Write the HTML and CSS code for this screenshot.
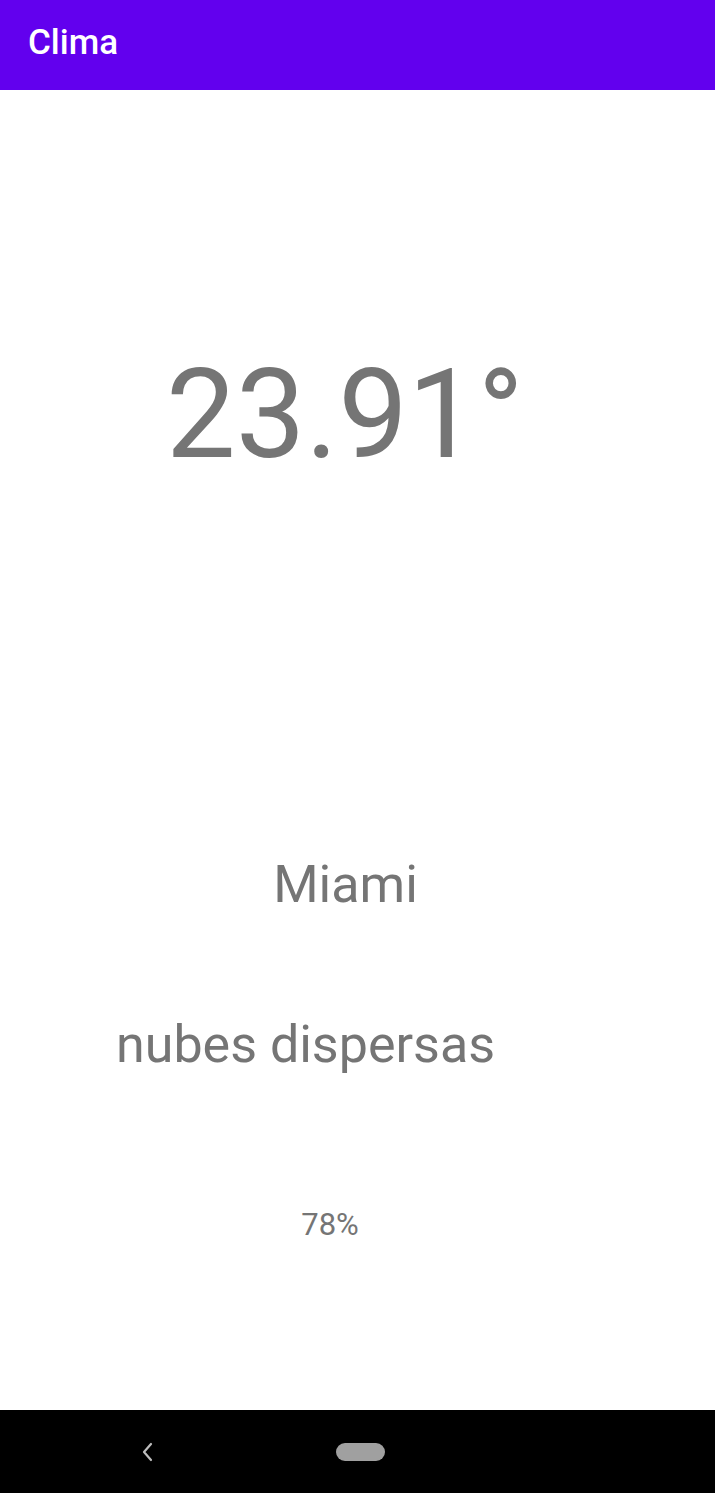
FILE: index.html
```html
<!DOCTYPE html>
<html lang="es">
<head>
<meta charset="utf-8">
<title>Clima</title>
<link rel="stylesheet" href="styles.css">
</head>
<body>
<div class="screen">
  <header class="appbar"><h1 class="title">Clima</h1></header>
  <main class="content">
    <div class="temp">23.91°</div>
    <div class="city">Miami</div>
    <div class="desc">nubes dispersas</div>
    <div class="humidity">78%</div>
  </main>
  <nav class="navbar">
    <svg class="back" width="12" height="20" viewBox="0 0 12 20"><path d="M10 2 L3 10 L10 18" fill="none" stroke="#bdbdbd" stroke-width="2.2" stroke-linecap="round" stroke-linejoin="round"/></svg>
    <div class="pill"></div>
  </nav>
</div>
</body>
</html>
```
FILE: styles.css
```css
html, body {
  margin: 0;
  padding: 0;
  background: #ffffff;
}
.screen {
  width: 715px;
  height: 1493px;
  display: flex;
  flex-direction: column;
  font-family: Roboto, "Noto Sans", sans-serif;
  overflow: hidden;
}
.appbar {
  height: 90px;
  flex: none;
  background: #6200ee;
  box-sizing: border-box;
  padding: 25px 0 0 28px;
}
.title {
  margin: 0;
  font-size: 35px;
  line-height: 35px;
  font-weight: 500;
  color: #ffffff;
}
.content {
  flex: 1;
  display: flex;
  flex-direction: column;
  padding-top: 263px;
  color: #757575;
}
.temp {
  font-size: 124px;
  line-height: 124px;
  text-align: center;
  padding-right: 25px;
}
.city {
  margin-top: 382px;
  font-size: 52px;
  line-height: 52px;
  text-align: center;
  padding-right: 24px;
}
.desc {
  margin-top: 108px;
  font-size: 52px;
  line-height: 52px;
  padding-left: 116px;
}
.humidity {
  margin-top: 138px;
  font-size: 31px;
  line-height: 31px;
  text-align: center;
  padding-right: 55px;
}
.navbar {
  height: 83px;
  flex: none;
  background: #000000;
  display: flex;
  align-items: center;
}
.back {
  margin-left: 141px;
}
.pill {
  width: 49px;
  height: 18px;
  border-radius: 9px;
  background: #a0a0a0;
  margin-left: 183px;
}
```
